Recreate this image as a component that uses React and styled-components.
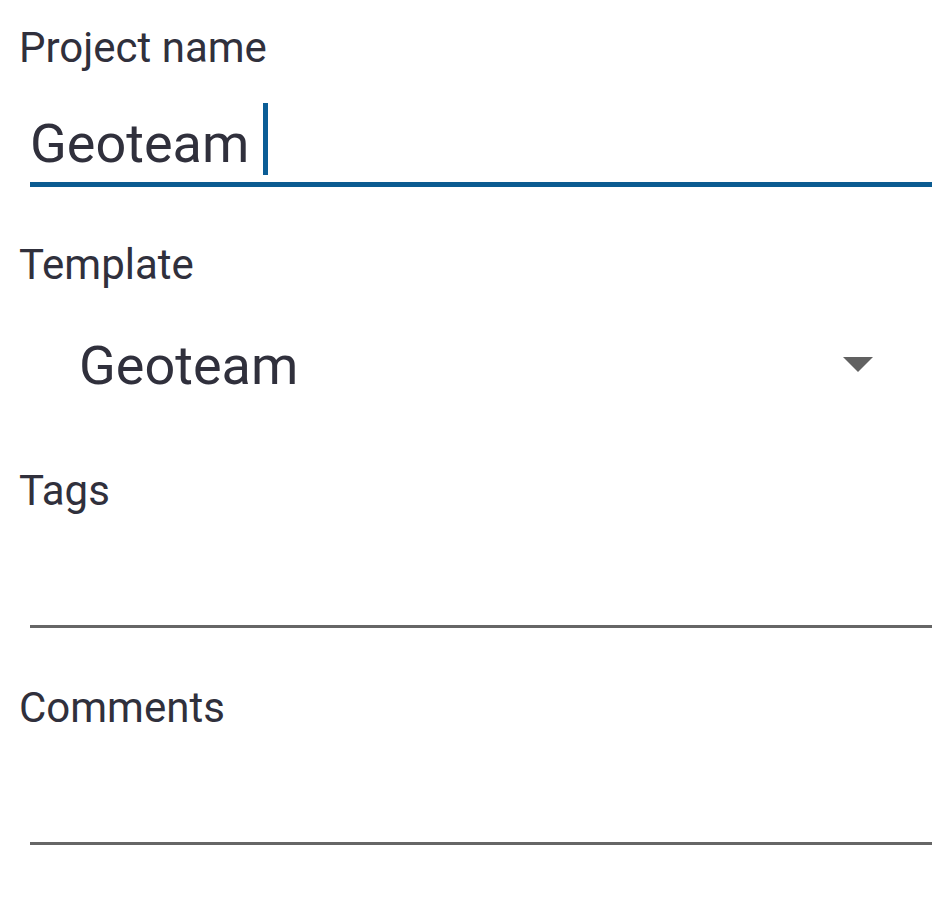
import React from "react";
import styled, { createGlobalStyle } from "styled-components";

const Global = createGlobalStyle`
  html, body { margin: 0; padding: 0; background: #ffffff; }
  body { font-family: Roboto, "Noto Sans", "Liberation Sans", sans-serif; }
`;

const Form = styled.div`
  display: flex;
  flex-direction: column;
  padding-top: 24px;
  width: 932px;
`;

const Group = styled.div`
  display: flex;
  flex-direction: column;
  margin-bottom: ${(p) => p.$gap}px;
`;

const Label = styled.div`
  font-size: 42px;
  line-height: 48px;
  color: #30303c;
  padding-left: 19px;
`;

const Field = styled.div`
  margin-left: 30px;
  margin-top: 36px;
  padding-bottom: 2px;
  height: 72px;
  box-sizing: content-box;
  border-bottom: ${(p) => (p.$focused ? "5px solid #0b5b91" : "3px solid #666666")};
  margin-bottom: ${(p) => (p.$focused ? 0 : 2)}px;
  display: flex;
  align-items: flex-start;
`;

const ValueText = styled.div`
  font-size: 54px;
  line-height: 72px;
  color: #30303c;
  white-space: nowrap;
`;

const Caret = styled.span`
  display: block;
  width: 5px;
  height: 72px;
  background: #0b5d96;
  margin-left: 14px;
  margin-top: -5px;
`;

const Spinner = styled.div`
  margin-top: 41px;
  height: 72px;
  display: flex;
  align-items: center;
  justify-content: space-between;
  padding-left: 79px;
  padding-right: 59px;
`;

const SpinnerValue = styled.div`
  font-size: 54px;
  line-height: 72px;
  color: #30303c;
`;

const Arrow = styled.svg`
  width: 30px;
  height: 15px;
  display: block;
  margin-top: -4px;
`;

export default function App() {
  return (
    <>
      <Global />
      <Form>
        <Group $gap={54}>
          <Label>Project name</Label>
          <Field $focused>
            <ValueText>Geoteam</ValueText>
            <Caret />
          </Field>
        </Group>
        <Group $gap={65}>
          <Label>Template</Label>
          <Spinner>
            <SpinnerValue>Geoteam</SpinnerValue>
            <Arrow viewBox="0 0 30 15">
              <polygon points="0,0 30,0 15,15" fill="#616161" />
            </Arrow>
          </Spinner>
        </Group>
        <Group $gap={54}>
          <Label>Tags</Label>
          <Field />
        </Group>
        <Group $gap={0}>
          <Label>Comments</Label>
          <Field />
        </Group>
      </Form>
    </>
  );
}
